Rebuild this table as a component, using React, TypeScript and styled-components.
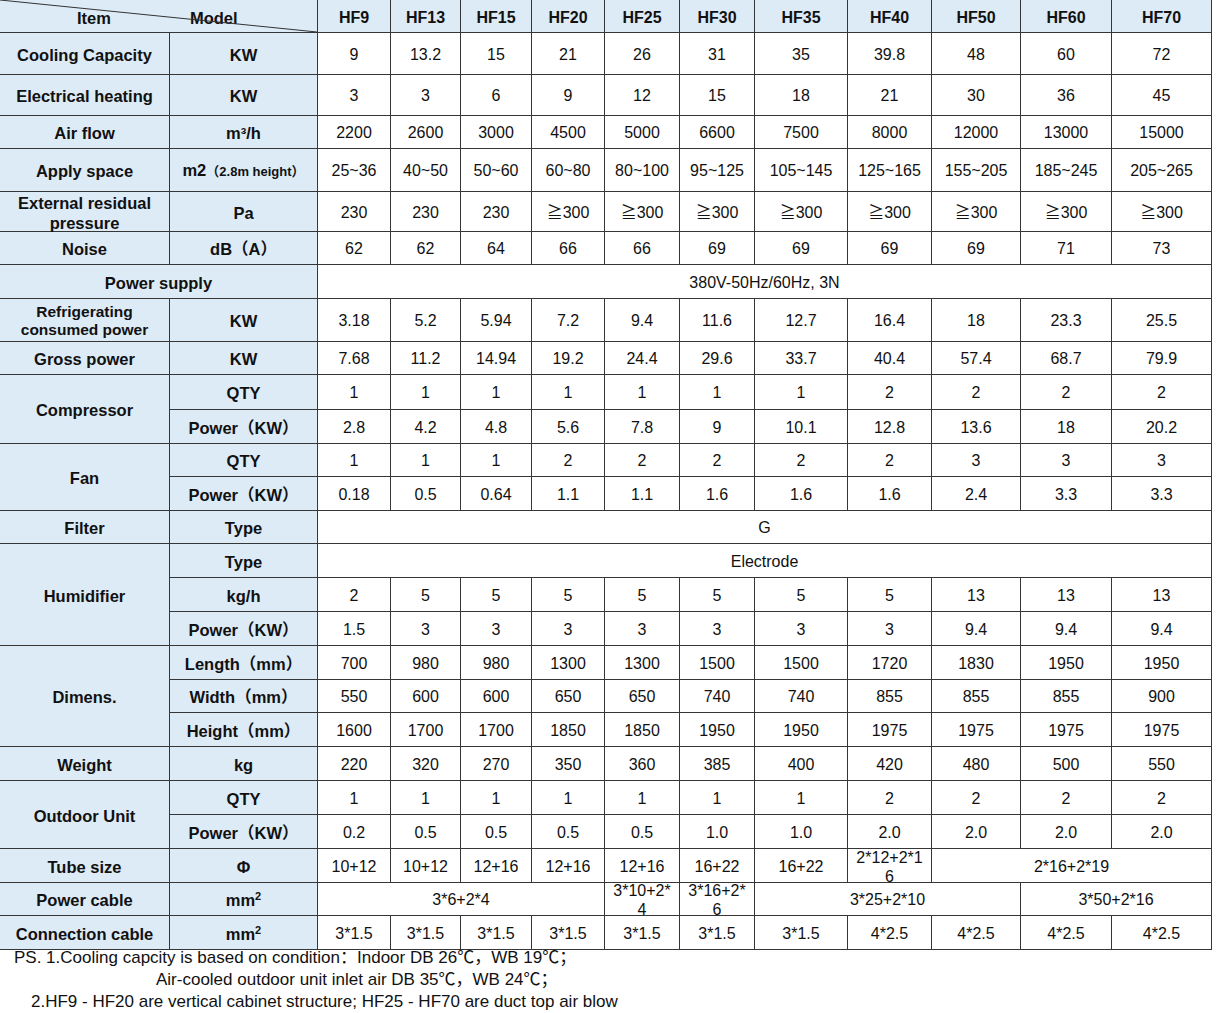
import React from "react";
import styled, { createGlobalStyle } from "styled-components";

const GlobalStyle = createGlobalStyle`
  html, body { margin: 0; padding: 0; background: #ffffff; }
  body {
    font-family: "Liberation Sans", Arial, "Noto Sans CJK SC", sans-serif;
    color: #111111;
  }
`;

const Page = styled.div`
  width: 1222px;
  height: 1013px;
  overflow: hidden;
`;

const Table = styled.table`
  border-collapse: collapse;
  table-layout: fixed;
  width: 1213px;
  margin: -1px 0 0 -1px;
`;

const Row = styled.tr<{ $h: number }>`
  height: ${(p) => p.$h}px;
`;

const base = `
  border: 1px solid #363636;
  text-align: center;
  vertical-align: middle;
  padding: 2px 5px 0;
  line-height: 18px;
  white-space: nowrap;
`;

const Corner = styled.th`
  ${base}
  position: relative;
  padding: 3px 0 0;
  background: #ddebf7;
  font-size: 16.5px;
  font-weight: 700;
`;

const CornerText = styled.div`
  display: flex;
  align-items: center;
  padding-left: 77px;
  gap: 79px;
`;

const Diagonal = styled.svg`
  position: absolute;
  left: 0;
  top: 0;
  width: 100%;
  height: 100%;
  overflow: visible;
  pointer-events: none;
`;

const Head = styled.th`
  ${base}
  padding-top: 3px;
  background: #ddebf7;
  font-size: 16px;
  font-weight: 700;
`;

const Label = styled.td<{ $size?: number }>`
  ${base}
  background: #ddebf7;
  font-size: ${(p) => p.$size ?? 16.5}px;
  font-weight: 700;
`;

const Value = styled.td`
  ${base}
  background: #ffffff;
  font-size: 16px;
  font-weight: 400;
`;

const Small = styled.span`
  font-size: 13px;
`;

const Sup = styled.sup`
  font-size: 11px;
  line-height: 0;
`;

const Stack = styled.span<{ $lh: number; $lines: number; $break?: boolean }>`
  display: block;
  line-height: ${(p) => p.$lh}px;
  margin: ${(p) => -((p.$lines - 1) * p.$lh) / 2}px 0;
  white-space: normal;
  word-break: ${(p) => (p.$break ? "break-all" : "normal")};
`;

const Notes = styled.div`
  margin-top: -3px;
  font-size: 17px;
  line-height: 22px;
`;

const NoteLine = styled.div<{ $indent: number }>`
  padding-left: ${(p) => p.$indent}px;
  white-space: nowrap;
`;

const models = ["HF9", "HF13", "HF15", "HF20", "HF25", "HF30", "HF35", "HF40", "HF50", "HF60", "HF70"];
const widths = [170, 148, 73, 70, 71, 73, 75, 75, 93, 84, 89, 91, 100];

type Simple = { label: React.ReactNode; unit: React.ReactNode; h: number; values: string[] };

const simpleTop: Simple[] = [
  { label: "Cooling Capacity", unit: "KW", h: 42, values: ["9", "13.2", "15", "21", "26", "31", "35", "39.8", "48", "60", "72"] },
  { label: "Electrical heating", unit: "KW", h: 41, values: ["3", "3", "6", "9", "12", "15", "18", "21", "30", "36", "45"] },
  { label: "Air flow", unit: "m³/h", h: 33, values: ["2200", "2600", "3000", "4500", "5000", "6600", "7500", "8000", "12000", "13000", "15000"] },
  {
    label: "Apply space",
    unit: (
      <>
        m2<Small>（2.8m height）</Small>
      </>
    ),
    h: 43,
    values: ["25~36", "40~50", "50~60", "60~80", "80~100", "95~125", "105~145", "125~165", "155~205", "185~245", "205~265"],
  },
  {
    label: (
      <Stack $lh={20} $lines={2}>
        External residual
        <br />
        pressure
      </Stack>
    ),
    unit: "Pa",
    h: 40,
    values: ["230", "230", "230", "≧300", "≧300", "≧300", "≧300", "≧300", "≧300", "≧300", "≧300"],
  },
  { label: "Noise", unit: "dB（A）", h: 33, values: ["62", "62", "64", "66", "66", "69", "69", "69", "69", "71", "73"] },
];

type Group = { label: string; rows: { unit: string; h: number; values: string[] | string }[] };

const groups1: Group[] = [
  {
    label: "Compressor",
    rows: [
      { unit: "QTY", h: 35, values: ["1", "1", "1", "1", "1", "1", "1", "2", "2", "2", "2"] },
      { unit: "Power（KW）", h: 34, values: ["2.8", "4.2", "4.8", "5.6", "7.8", "9", "10.1", "12.8", "13.6", "18", "20.2"] },
    ],
  },
  {
    label: "Fan",
    rows: [
      { unit: "QTY", h: 33, values: ["1", "1", "1", "2", "2", "2", "2", "2", "3", "3", "3"] },
      { unit: "Power（KW）", h: 34, values: ["0.18", "0.5", "0.64", "1.1", "1.1", "1.6", "1.6", "1.6", "2.4", "3.3", "3.3"] },
    ],
  },
  { label: "Filter", rows: [{ unit: "Type", h: 33, values: "G" }] },
  {
    label: "Humidifier",
    rows: [
      { unit: "Type", h: 34, values: "Electrode" },
      { unit: "kg/h", h: 34, values: ["2", "5", "5", "5", "5", "5", "5", "5", "13", "13", "13"] },
      { unit: "Power（KW）", h: 34, values: ["1.5", "3", "3", "3", "3", "3", "3", "3", "9.4", "9.4", "9.4"] },
    ],
  },
  {
    label: "Dimens.",
    rows: [
      { unit: "Length（mm）", h: 34, values: ["700", "980", "980", "1300", "1300", "1500", "1500", "1720", "1830", "1950", "1950"] },
      { unit: "Width（mm）", h: 33, values: ["550", "600", "600", "650", "650", "740", "740", "855", "855", "855", "900"] },
      { unit: "Height（mm）", h: 34, values: ["1600", "1700", "1700", "1850", "1850", "1950", "1950", "1975", "1975", "1975", "1975"] },
    ],
  },
  { label: "Weight", rows: [{ unit: "kg", h: 34, values: ["220", "320", "270", "350", "360", "385", "400", "420", "480", "500", "550"] }] },
  {
    label: "Outdoor Unit",
    rows: [
      { unit: "QTY", h: 34, values: ["1", "1", "1", "1", "1", "1", "1", "2", "2", "2", "2"] },
      { unit: "Power（KW）", h: 34, values: ["0.2", "0.5", "0.5", "0.5", "0.5", "1.0", "1.0", "2.0", "2.0", "2.0", "2.0"] },
    ],
  },
];

const Wrapped = ({ text }: { text: string }) => (
  <Stack $lh={19} $lines={2} $break>
    {text}
  </Stack>
);

const Mm2 = () => (
  <>
    mm<Sup>2</Sup>
  </>
);

function renderValues(values: string[] | string) {
  if (typeof values === "string") return <Value colSpan={11}>{values}</Value>;
  return values.map((v, i) => <Value key={i}>{v}</Value>);
}

export default function App() {
  return (
    <Page>
      <GlobalStyle />
      <Table>
        <colgroup>
          {widths.map((w, i) => (
            <col key={i} style={{ width: w }} />
          ))}
        </colgroup>
        <tbody>
          <Row $h={33}>
            <Corner colSpan={2}>
              <CornerText>
                <span>Item</span>
                <span>Model</span>
              </CornerText>
              <Diagonal preserveAspectRatio="none" viewBox="0 0 100 100">
                <line x1="0" y1="0" x2="100" y2="100" stroke="#333" strokeWidth="1" vectorEffect="non-scaling-stroke" />
              </Diagonal>
            </Corner>
            {models.map((m) => (
              <Head key={m}>{m}</Head>
            ))}
          </Row>

          {simpleTop.map((r, i) => (
            <Row key={i} $h={r.h}>
              <Label>{r.label}</Label>
              <Label>{r.unit}</Label>
              {renderValues(r.values)}
            </Row>
          ))}

          <Row $h={34}>
            <Label colSpan={2}>Power supply</Label>
            <Value colSpan={11}>380V-50Hz/60Hz, 3N</Value>
          </Row>
          <Row $h={43}>
            <Label $size={15.5}>
              <Stack $lh={18} $lines={2}>
                Refrigerating
                <br />
                consumed power
              </Stack>
            </Label>
            <Label>KW</Label>
            {renderValues(["3.18", "5.2", "5.94", "7.2", "9.4", "11.6", "12.7", "16.4", "18", "23.3", "25.5"])}
          </Row>
          <Row $h={33}>
            <Label>Gross power</Label>
            <Label>KW</Label>
            {renderValues(["7.68", "11.2", "14.94", "19.2", "24.4", "29.6", "33.7", "40.4", "57.4", "68.7", "79.9"])}
          </Row>

          {groups1.map((g) =>
            g.rows.map((r, j) => (
              <Row key={g.label + j} $h={r.h}>
                {j === 0 && <Label rowSpan={g.rows.length}>{g.label}</Label>}
                <Label>{r.unit}</Label>
                {renderValues(r.values)}
              </Row>
            ))
          )}

          <Row $h={34}>
            <Label>Tube size</Label>
            <Label>Φ</Label>
            {renderValues(["10+12", "10+12", "12+16", "12+16", "12+16", "16+22", "16+22"])}
            <Value>
              <Wrapped text="2*12+2*16" />
            </Value>
            <Value colSpan={3}>2*16+2*19</Value>
          </Row>
          <Row $h={33}>
            <Label>Power cable</Label>
            <Label>
              <Mm2 />
            </Label>
            <Value colSpan={4}>3*6+2*4</Value>
            <Value>
              <Wrapped text="3*10+2*4" />
            </Value>
            <Value>
              <Wrapped text="3*16+2*6" />
            </Value>
            <Value colSpan={3}>3*25+2*10</Value>
            <Value colSpan={2}>3*50+2*16</Value>
          </Row>
          <Row $h={34}>
            <Label>Connection cable</Label>
            <Label>
              <Mm2 />
            </Label>
            {renderValues(["3*1.5", "3*1.5", "3*1.5", "3*1.5", "3*1.5", "3*1.5", "3*1.5", "4*2.5", "4*2.5", "4*2.5", "4*2.5"])}
          </Row>
        </tbody>
      </Table>
      <Notes>
        <NoteLine $indent={14}>PS. 1.Cooling capcity is based on condition：Indoor DB 26℃，WB 19℃；</NoteLine>
        <NoteLine $indent={156}>Air-cooled outdoor unit inlet air DB 35℃，WB 24℃；</NoteLine>
        <NoteLine $indent={31}>2.HF9 - HF20 are vertical cabinet structure; HF25 - HF70 are duct top air blow</NoteLine>
      </Notes>
    </Page>
  );
}
